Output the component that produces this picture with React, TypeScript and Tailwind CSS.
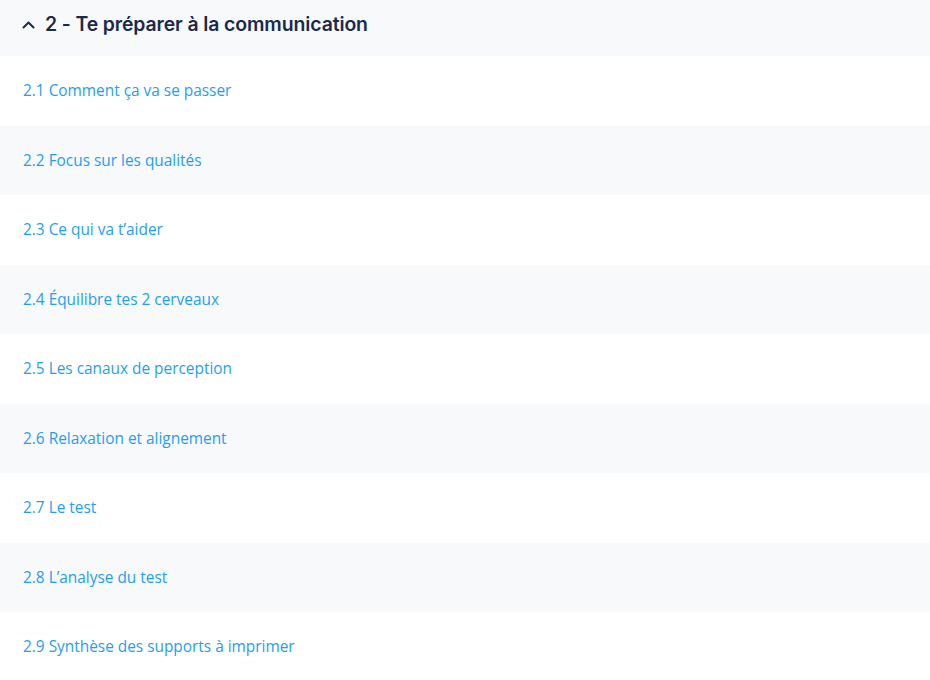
const lessons = [
  '2.1 Comment ça va se passer',
  '2.2 Focus sur les qualités',
  '2.3 Ce qui va t’aider',
  '2.4 Équilibre tes 2 cerveaux',
  '2.5 Les canaux de perception',
  '2.6 Relaxation et alignement',
  '2.7 Le test',
  '2.8 L’analyse du test',
  '2.9 Synthèse des supports à imprimer',
];

export default function App() {
  return (
    <div className="w-[930px] h-[680px] overflow-hidden bg-white font-['Inter',sans-serif]">
      <div className="h-[56px] flex items-center gap-[10px] pl-[22px] pb-[7px] bg-[#f8f9fb]">
        <svg width="13" height="8" viewBox="0 0 13 8" fill="none" className="mt-[1px]">
          <path d="M1.5 6.5 L6.5 1.5 L11.5 6.5" stroke="#1b2a4e" strokeWidth="2" strokeLinecap="round" strokeLinejoin="round" />
        </svg>
        <h2 className="text-[19.4px] font-semibold text-[#1a2a4d] tracking-[-0.1px]">
          2 - Te préparer à la communication
        </h2>
      </div>
      {lessons.map((title, i) => (
        <div
          key={title}
          className={`h-[69.5px] flex items-center pl-[23px] ${i % 2 === 1 ? 'bg-[#f8f9fb]' : 'bg-white'}`}
        >
          <a href="#" className="text-[15.4px] text-[#1f9df7] font-['Open_Sans',sans-serif]">
            {title}
          </a>
        </div>
      ))}
    </div>
  );
}
